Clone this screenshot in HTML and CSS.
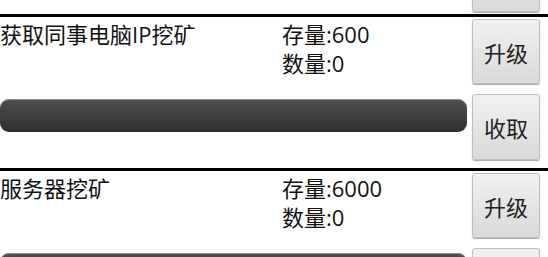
FILE: index.html
```html
<!DOCTYPE html>
<html lang="zh-CN">
<head>
<meta charset="utf-8">
<title>挖矿</title>
<link rel="stylesheet" href="styles.css">
</head>
<body>
<div class="list">
  <div class="tail">
    <div class="tail-btn" aria-hidden="true"></div>
  </div>
  <div class="row">
    <div class="sep"></div>
    <div class="body">
      <div class="main">
        <div class="info">
          <div class="title">获取同事电脑IP挖矿</div>
          <div class="counts"><div>存量:600</div><div>数量:0</div></div>
        </div>
        <div class="bar"></div>
      </div>
      <div class="actions">
        <button class="btn btn-up">升级</button>
        <button class="btn btn-get">收取</button>
      </div>
    </div>
  </div>
  <div class="row">
    <div class="sep"></div>
    <div class="body">
      <div class="main">
        <div class="info">
          <div class="title">服务器挖矿</div>
          <div class="counts"><div>存量:6000</div><div>数量:0</div></div>
        </div>
        <div class="bar"></div>
      </div>
      <div class="actions">
        <button class="btn btn-up">升级</button>
        <button class="btn btn-get">收取</button>
      </div>
    </div>
  </div>
</div>
</body>
</html>
```
FILE: styles.css
```css
html, body {
  margin: 0;
  padding: 0;
  background: #ffffff;
  overflow: hidden;
}
body {
  font-family: "Open Sans", "Noto Sans CJK SC", sans-serif;
  font-size: 22px;
  color: #111111;
}
.tail {
  height: 14px;
  display: flex;
  justify-content: flex-end;
  align-items: flex-end;
  padding: 0 8px 2px 0;
  box-sizing: border-box;
  overflow: hidden;
}
.tail-btn {
  width: 68px;
  height: 40px;
  flex: none;
  box-sizing: border-box;
  border: 1px solid #bdbdbd;
  border-radius: 3px;
  background: linear-gradient(#e6e6e6, #d9d9d9);
  box-shadow: 0 1px 1px rgba(0, 0, 0, 0.35);
}
.row {
  height: 154px;
  display: flex;
  flex-direction: column;
}
.sep {
  height: 3px;
  background: #000000;
  flex: none;
}
.body {
  flex: 1;
  display: flex;
  padding-right: 8px;
}
.main {
  flex: 1;
  display: flex;
  flex-direction: column;
}
.info {
  height: 82px;
  display: grid;
  grid-template-columns: 282px 1fr;
  padding-top: 3px;
  box-sizing: border-box;
  line-height: 29px;
}
.title {
  white-space: nowrap;
}
.bar {
  height: 33px;
  border-radius: 9px;
  background: linear-gradient(#6a6a6a 0, #4c4c4c 2px, #404040 50%, #2c2c2c 100%);
  box-shadow: inset 0 1px 0 #8a8a8a;
}
.actions {
  width: 68px;
  margin-left: 5px;
  display: flex;
  flex-direction: column;
  padding-top: 2px;
  gap: 10px;
}
.btn {
  font-family: "Open Sans", "Noto Sans CJK SC", sans-serif;
  font-size: 22px;
  color: #222222;
  padding: 0;
  margin: 0;
  border: 1px solid #bdbdbd;
  border-radius: 3px;
  background: linear-gradient(#f1f1f1, #d9d9d9);
  box-shadow: 0 1px 1px rgba(0, 0, 0, 0.35);
}
.btn-up {
  height: 65px;
}
.btn-get {
  height: 66px;
}
```
